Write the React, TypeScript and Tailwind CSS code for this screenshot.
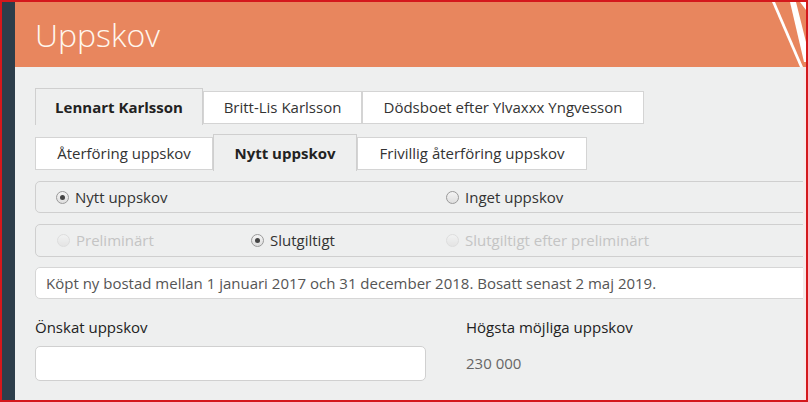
import React from 'react'

const font = { fontFamily: '"Open Sans", "Noto Sans", sans-serif' }

type RadioProps = { label: string; checked?: boolean; disabled?: boolean; width?: string }

function Radio({ label, checked, disabled, width }: RadioProps) {
  return (
    <label className={`flex items-center gap-[6px] ${width ?? ''}`}>
      <span
        className={`flex h-[13px] w-[13px] items-center justify-center rounded-full border bg-gradient-to-b from-[#f4f4f4] to-[#dedede] ${
          disabled ? 'border-[#d2d2d2] opacity-60' : 'border-[#9a9a9a]'
        }`}
      >
        {checked && <span className="h-[5px] w-[5px] rounded-full bg-[#444]" />}
      </span>
      <span className={disabled ? 'text-[#c4c4c4]' : 'text-[#333]'}>{label}</span>
    </label>
  )
}

function Tab({ label, active, width }: { label: string; active?: boolean; width: string }) {
  return active ? (
    <div
      className={`${width} flex h-[37px] items-center justify-center border border-b-0 border-[#cfcfcf] bg-[#eeefef] font-bold text-[#222]`}
    >
      {label}
    </div>
  ) : (
    <div
      className={`${width} mb-[1px] flex h-[33px] items-center justify-center border border-[#d4d4d4] bg-white text-[#333]`}
    >
      {label}
    </div>
  )
}

export default function App() {
  return (
    <div
      className="flex h-[402px] w-[808px] overflow-hidden border-2 border-[#d4181c] text-[15px]"
      style={font}
    >
      {/* side nav edge */}
      <div className="w-[13px] shrink-0 bg-[#2d3d4a]" />

      <div className="flex min-w-0 flex-1 flex-col">
        <header className="relative flex h-[65px] shrink-0 items-center overflow-hidden bg-[#e8865e] pl-[20px]">
          <h1 className="text-[32px] font-light leading-none text-[#fff7ee]">Uppskov</h1>
          <svg className="absolute right-0 top-0" width="40" height="65" viewBox="0 0 40 65" aria-hidden>
            <polygon points="6,0 9,0 37,65 34,65" fill="#fff" />
            <polygon points="24,0 40,0 40,60 38,60" fill="#fff" />
            <polygon points="30,0 40,0 40,40" fill="#e8865e" />
            <polygon points="34,0 40,0 40,8" fill="#fff" />
          </svg>
        </header>

        <main className="flex-1 overflow-hidden border-r-[3px] border-[#f6e9e9] bg-[#eeefef] pl-[20px] pt-[21px]">
          <div className="flex items-end">
            <Tab label="Lennart Karlsson" active width="w-[168px]" />
            <Tab label="Britt-Lis Karlsson" width="w-[159px]" />
            <Tab label="Dödsboet efter Ylvaxxx Yngvesson" width="w-[282px]" />
          </div>

          <div className="mt-[9px] flex items-end">
            <Tab label="Återföring uppskov" width="w-[178px]" />
            <Tab label="Nytt uppskov" active width="w-[144px]" />
            <Tab label="Frivillig återföring uppskov" width="w-[230px]" />
          </div>

          <div className="mt-[10px] flex h-[32px] w-[900px] items-center rounded-[5px] border border-[#cfcfcf] pl-[20px]">
            <Radio label="Nytt uppskov" checked width="w-[390px]" />
            <Radio label="Inget uppskov" />
          </div>

          <div className="mt-[11px] flex h-[33px] w-[900px] items-center rounded-[5px] border border-[#cfcfcf] pl-[21px]">
            <Radio label="Preliminärt" disabled width="w-[194px]" />
            <Radio label="Slutgiltigt" checked width="w-[195px]" />
            <Radio label="Slutgiltigt efter preliminärt" disabled />
          </div>

          <div className="mt-[10px] flex h-[32px] w-[900px] items-center rounded-[5px] border border-[#d6d6d6] bg-white pl-[10px] text-[#555]">
            Köpt ny bostad mellan 1 januari 2017 och 31 december 2018. Bosatt senast 2 maj 2019.
          </div>

          <div className="mt-[17px] flex">
            <div className="w-[431px]">
              <div className="h-[23px] leading-[23px] text-[#222]">Önskat uppskov</div>
              <input
                className="mt-[7px] block h-[35px] w-[391px] rounded-[5px] border border-[#d0d0d0] bg-white outline-none"
                aria-label="Önskat uppskov"
              />
            </div>
            <div>
              <div className="h-[23px] leading-[23px] text-[#222]">Högsta möjliga uppskov</div>
              <div className="mt-[7px] h-[35px] leading-[35px] text-[#666]">230 000</div>
            </div>
          </div>
        </main>
      </div>
    </div>
  )
}
